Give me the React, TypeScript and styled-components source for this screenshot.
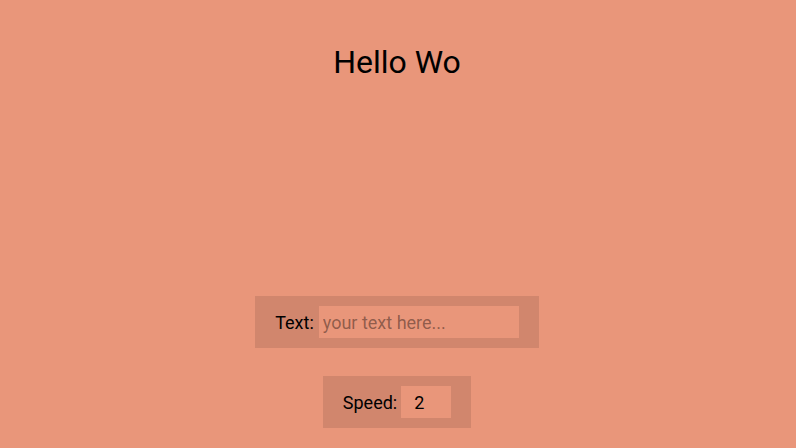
import React, { useState } from "react";
import styled, { createGlobalStyle } from "styled-components";

const Global = createGlobalStyle`
  html, body {
    margin: 0;
    padding: 0;
    background: #e9967a;
  }
  body {
    font-family: Roboto, "Liberation Sans", sans-serif;
  }
`;

const Page = styled.div`
  height: 448px;
  box-sizing: border-box;
  display: flex;
  flex-direction: column;
  align-items: center;
  padding: 0 2px 20px 0;
  background: #e9967a;
`;

const Title = styled.h1`
  margin: 43px 0 0;
  font-size: 32px;
  font-weight: 400;
  color: #000;
  line-height: normal;
`;

const Spacer = styled.div`
  flex: 1;
`;

const Controls = styled.div`
  display: flex;
  flex-direction: column;
  align-items: center;
  gap: 28px;
`;

const Panel = styled.label<{ $gap: number }>`
  display: flex;
  align-items: center;
  gap: ${(p) => p.$gap}px;
  padding: 10px 20px;
  background: rgba(0, 0, 0, 0.1);
  font-size: 18px;
  color: #000;
`;

const Field = styled.input<{ $w: number; $pad: number }>`
  width: ${(p) => p.$w}px;
  height: 32px;
  box-sizing: border-box;
  border: none;
  outline: none;
  padding: 0 4px 0 ${(p) => p.$pad}px;
  background: #e9967a;
  font-family: Roboto, "Liberation Sans", sans-serif;
  font-size: 18px;
  color: #000;
  &::placeholder {
    color: rgba(0, 0, 0, 0.4);
  }
`;

export default function App() {
  const [text, setText] = useState("");
  const [speed, setSpeed] = useState("2");
  return (
    <Page>
      <Global />
      <Title>Hello Wo</Title>
      <Spacer />
      <Controls>
        <Panel $gap={5}>
          Text:
          <Field
            $w={200}
            $pad={4}
            value={text}
            placeholder="your text here..."
            onChange={(e) => setText(e.target.value)}
          />
        </Panel>
        <Panel $gap={4}>
          Speed:
          <Field
            $w={50}
            $pad={13}
            value={speed}
            onChange={(e) => setSpeed(e.target.value)}
          />
        </Panel>
      </Controls>
    </Page>
  );
}
